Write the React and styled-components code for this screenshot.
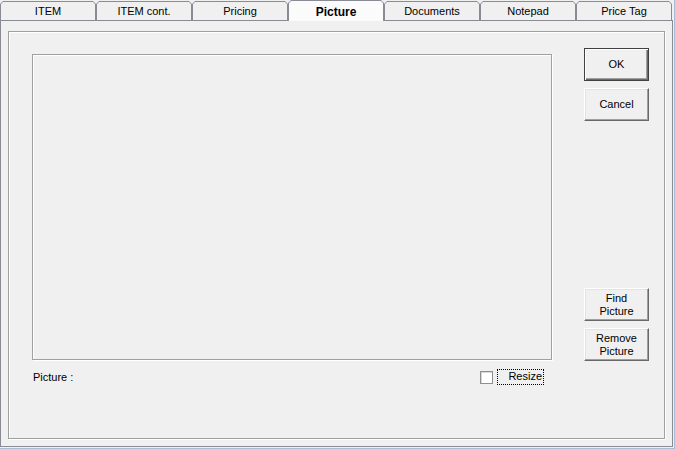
import styled, { createGlobalStyle } from "styled-components";

const GlobalStyle = createGlobalStyle`
  html, body {
    margin: 0;
    padding: 0;
    background: #f0f0f0;
  }
  body {
    font-family: "Liberation Sans", Arial, sans-serif;
    font-size: 11px;
    color: #000;
  }
  * {
    box-sizing: border-box;
  }
`;

const Window = styled.div`
  width: 675px;
  height: 449px;
  background: #f0f0f0;
  border-right: 1px solid #a9bcd6;
  border-bottom: 1px solid #a9bcd6;
  display: flex;
  flex-direction: column;
`;

const TabStrip = styled.div`
  display: flex;
  align-items: flex-end;
  height: 20px;
  position: relative;
  z-index: 1;
`;

const Tab = styled.div`
  width: 96px;
  height: ${(p) => (p.$active ? "21px" : "19px")};
  margin-bottom: ${(p) => (p.$active ? "-1px" : "0")};
  padding: 1px 1px 0;
  background: #898c95;
  clip-path: polygon(3px 0, calc(100% - 3px) 0, 100% 3px, 100% 100%, 0 100%, 0 3px);
`;

const TabFace = styled.div`
  height: 100%;
  background: ${(p) => (p.$active ? "#fbfbfb" : "#f0f0f0")};
  clip-path: polygon(2px 0, calc(100% - 2px) 0, 100% 2px, 100% 100%, 0 100%, 0 2px);
  padding-top: ${(p) => (p.$active ? "5px" : "3px")};
  text-align: center;
  line-height: 13px;
  font-weight: ${(p) => (p.$active ? 700 : 400)};
  font-size: ${(p) => (p.$active ? "12px" : "11px")};
`;

const Panel = styled.div`
  flex: 1;
  margin: 0 1px 1px 0;
  border: 1px solid #898c95;
  padding: 10px 7px 7px 7px;
  display: flex;
`;

const Frame = styled.div`
  flex: 1;
  border: 1px solid #a0a0a0;
  box-shadow: inset 1px 1px 0 #fff, 1px 1px 0 #fff;
  display: flex;
  padding: 16px 0 0 23px;
`;

const LeftCol = styled.div`
  width: 520px;
  padding-top: 6px;
  display: flex;
  flex-direction: column;
`;

const PictureBox = styled.div`
  width: 520px;
  height: 306px;
  border: 1px solid #a0a0a0;
  box-shadow: 1px 1px 0 #fff, inset 1px 1px 0 #fff;
`;

const LabelRow = styled.div`
  margin-top: 10px;
  height: 14px;
  display: flex;
  align-items: center;
  justify-content: space-between;
  padding: 0 8px 0 1px;
`;

const Label = styled.span`
  line-height: 13px;
  padding-top: 0;
`;

const CheckGroup = styled.label`
  display: flex;
  align-items: center;
  gap: 4px;
`;

const CheckBox = styled.span`
  width: 13px;
  height: 13px;
  background: #fff;
  border: 1px solid #8e8f8f;
  box-shadow: inset 1px 1px 0 #d8d8d8;
`;

const FocusText = styled.span`
  width: 47px;
  height: 16px;
  outline: 1px dotted #000;
  outline-offset: -1px;
  text-align: right;
  padding: 1px 2px 0 0;
  line-height: 13px;
`;

const RightCol = styled.div`
  margin-left: 32px;
  width: 65px;
  height: 313px;
  display: flex;
  flex-direction: column;
  justify-content: space-between;
`;

const ButtonGroup = styled.div`
  display: flex;
  flex-direction: column;
  gap: 7px;
`;

const Button = styled.button`
  width: 65px;
  height: 33px;
  padding: 0;
  font-family: "Liberation Sans", Arial, sans-serif;
  font-size: 11px;
  line-height: 13px;
  color: #000;
  background: #f0f0f0;
  border: 1px solid;
  border-color: ${(p) => (p.$default ? "#404040" : "#fff #696969 #696969 #fff")};
  box-shadow: ${(p) =>
    p.$default
      ? "inset 1px 1px 0 #fff, inset -1px -1px 0 #696969, inset -2px -2px 0 #a0a0a0"
      : "inset -1px -1px 0 #a0a0a0, inset 1px 1px 0 #e3e3e3"};
`;

const tabs = ["ITEM", "ITEM cont.", "Pricing", "Picture", "Documents", "Notepad", "Price Tag"];

export default function App() {
  return (
    <>
      <GlobalStyle />
      <Window>
        <TabStrip>
          {tabs.map((t) => (
            <Tab key={t} $active={t === "Picture"}>
              <TabFace $active={t === "Picture"}>{t}</TabFace>
            </Tab>
          ))}
        </TabStrip>
        <Panel>
          <Frame>
            <LeftCol>
              <PictureBox />
              <LabelRow>
                <Label>Picture :</Label>
                <CheckGroup>
                  <CheckBox />
                  <FocusText>Resize</FocusText>
                </CheckGroup>
              </LabelRow>
            </LeftCol>
            <RightCol>
              <ButtonGroup>
                <Button $default>OK</Button>
                <Button>Cancel</Button>
              </ButtonGroup>
              <ButtonGroup>
                <Button>
                  Find
                  <br />
                  Picture
                </Button>
                <Button>
                  Remove
                  <br />
                  Picture
                </Button>
              </ButtonGroup>
            </RightCol>
          </Frame>
        </Panel>
      </Window>
    </>
  );
}
